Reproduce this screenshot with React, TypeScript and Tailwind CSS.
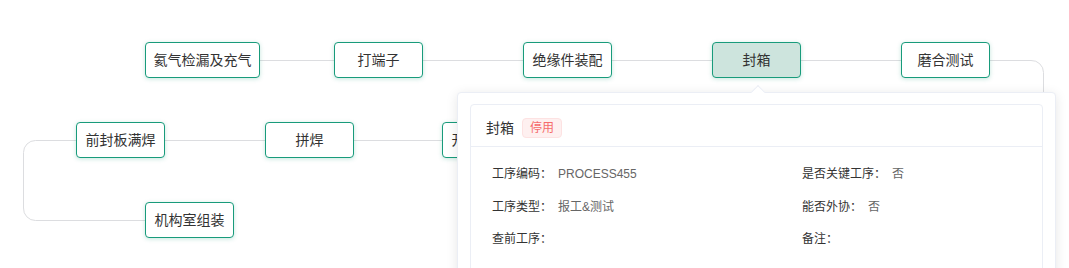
import React from "react";

const nodeBase =
  "absolute h-[36px] flex items-center justify-center rounded-[4px] border border-[#189b7b] text-[14px] text-[#333] whitespace-nowrap shadow-[0_1px_4px_rgba(24,155,123,0.25)]";

type N = { label: string; x: number; y: number; w?: number; active?: boolean };

const nodes: N[] = [
  { label: "氦气检漏及充气", x: 145, y: 42, w: 115 },
  { label: "打端子", x: 334, y: 42 },
  { label: "绝缘件装配", x: 523, y: 42 },
  { label: "封箱", x: 712, y: 42, active: true },
  { label: "磨合测试", x: 901, y: 42 },
  { label: "前封板满焊", x: 76, y: 122 },
  { label: "拼焊", x: 265, y: 122 },
  { label: "开关板装配", x: 442, y: 122 },
  { label: "机构室组装", x: 145, y: 202 },
];

function Row({ label, value }: { label: string; value?: string }) {
  return (
    <div className="flex items-center leading-[20px] text-[12px]">
      <span className="text-[#333]">{label}</span>
      {value ? <span className="ml-[6px] text-[#666]">{value}</span> : null}
    </div>
  );
}

export default function App() {
  return (
    <div className="relative w-[1069px] h-[268px] overflow-hidden bg-white font-['Liberation_Sans','Noto_Sans_CJK_SC',sans-serif]">
      <svg className="absolute left-0 top-0" width="1069" height="268">
        <g fill="none" stroke="#dcdde0" strokeWidth="1">
          <path d="M260 60.5 H1031 A12 12 0 0 1 1043.5 72.5 V140" />
          <path d="M457 140.5 H35.5 A12 12 0 0 0 23.5 152.5 V208 A12 12 0 0 0 35.5 220.5 H145" />
        </g>
      </svg>

      {nodes.map((n) => (
        <div
          key={n.label}
          className={`${nodeBase} ${n.active ? "bg-[#cde4dd]" : "bg-white"}`}
          style={{ left: n.x, top: n.y, width: n.w ?? 89 }}
        >
          {n.label}
        </div>
      ))}

      {/* popover */}
      <div className="absolute left-[457px] top-[92px] w-[599px] h-[200px] bg-white border border-[#ebeef5] rounded-[4px] shadow-[0_2px_12px_rgba(0,0,0,0.1)] px-[12px] pt-[11px]">
        <div className="absolute left-[295px] top-[-6px] w-[10px] h-[10px] rotate-45 bg-white border-l border-t border-[#ebeef5]" />
        <div className="relative border border-[#ebeef5] rounded-[4px] bg-white h-[200px]">
          <div className="flex items-center gap-[8px] pl-[15px] pt-[13px] pb-[8px] border-b border-[#ebeef5]">
            <span className="text-[14px] leading-[20px] text-[#333]">封箱</span>
            <span className="h-[20px] px-[7px] flex items-center rounded-[4px] border border-[#fde2e2] bg-[#fef0f0] text-[#f56c6c] text-[12px]">
              停用
            </span>
          </div>
          <div className="grid grid-cols-[310px_1fr] gap-y-[12.5px] pl-[21px] pt-[17px]">
            <Row label="工序编码：" value="PROCESS455" />
            <Row label="是否关键工序：" value="否" />
            <Row label="工序类型：" value="报工&测试" />
            <Row label="能否外协：" value="否" />
            <Row label="查前工序：" />
            <Row label="备注：" />
          </div>
        </div>
      </div>
    </div>
  );
}
